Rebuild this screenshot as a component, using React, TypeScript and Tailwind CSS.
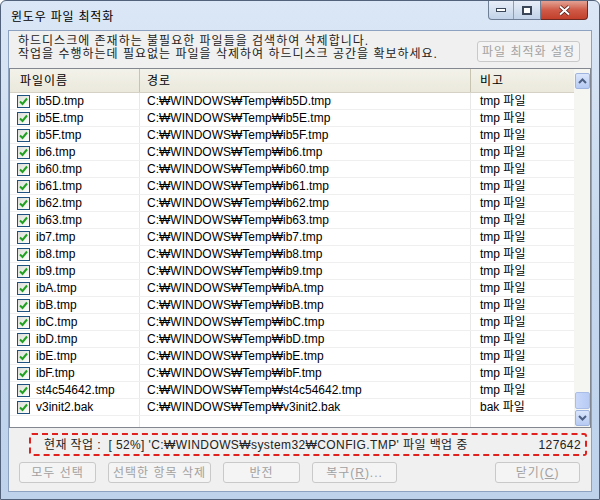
import React from 'react'

const files = [
  'ib5D.tmp', 'ib5E.tmp', 'ib5F.tmp', 'ib6.tmp', 'ib60.tmp', 'ib61.tmp', 'ib62.tmp', 'ib63.tmp',
  'ib7.tmp', 'ib8.tmp', 'ib9.tmp', 'ibA.tmp', 'ibB.tmp', 'ibC.tmp', 'ibD.tmp', 'ibE.tmp', 'ibF.tmp',
  'st4c54642.tmp', 'v3init2.bak',
]

const font = { fontFamily: '"Liberation Sans", "Noto Sans CJK KR", sans-serif' }

function Check() {
  return (
    <span className="flex h-[13px] w-[13px] items-center justify-center border border-[#1c5180] bg-gradient-to-br from-[#dcdcd7] to-white">
      <svg width="9" height="9" viewBox="0 0 9 9">
        <path d="M1 4.5 L3.5 7 L8 1.5" fill="none" stroke="#21a121" strokeWidth="2" />
      </svg>
    </span>
  )
}

function Btn({ label, w }: { label: React.ReactNode; w: string }) {
  return (
    <div className={`${w} flex h-[21px] items-center justify-center rounded-[3px] border border-[#c9c9c9] bg-[#f4f4f4] text-[12px] tracking-[1px] text-[#a2a2a2]`}>
      {label}
    </div>
  )
}

function ScrollBtn({ up }: { up?: boolean }) {
  return (
    <div className="flex h-[16px] w-[15px] items-center justify-center rounded-[2px] border border-[#9fb5e0] bg-gradient-to-b from-[#dbe6fb] to-[#b6caf3]">
      <svg width="9" height="6" viewBox="0 0 9 6">
        <path d={up ? 'M1 5 L4.5 1.5 L8 5' : 'M1 1 L4.5 4.5 L8 1'} fill="none" stroke="#4d6185" strokeWidth="2" />
      </svg>
    </div>
  )
}

export default function App() {
  return (
    <div style={font} className="flex h-[500px] w-[600px] flex-col overflow-hidden rounded-t-[6px] border border-[#51627a] bg-gradient-to-b from-[#dbe7f6] via-[#c6d8ee] to-[#bed2ec] text-black">
      {/* title bar */}
      <div className="flex h-[29px] items-start justify-between">
        <div className="pl-[10px] pt-[8px] text-[12px] leading-[16px] tracking-[0.8px]">윈도우 파일 최적화</div>
        <div className="mr-[11px] flex">
          <div className="flex h-[19px] rounded-bl-[4px] border border-t-0 border-[#6f7f96] bg-gradient-to-b from-[#e8eef8] to-[#c2d2e8]">
            <div className="flex w-[25px] items-center justify-center border-r border-[#8d9db4]">
              <div className="h-[4px] w-[10px] border border-[#3b4658] bg-white" />
            </div>
            <div className="flex w-[26px] items-center justify-center">
              <div className="h-[9px] w-[10px] border-2 border-[#3b4658] bg-white" />
            </div>
          </div>
          <div className="flex h-[19px] w-[47px] items-center justify-center rounded-br-[4px] border border-l-0 border-t-0 border-[#6e2a22] bg-gradient-to-b from-[#e2a294] via-[#cf5a47] to-[#c23f2b]">
            <svg width="13" height="11" viewBox="0 0 13 11">
              <path d="M2 1.5 L11 9.5 M11 1.5 L2 9.5" stroke="#4b1a14" strokeWidth="3.5" />
              <path d="M2 1.5 L11 9.5 M11 1.5 L2 9.5" stroke="white" strokeWidth="2" />
            </svg>
          </div>
        </div>
      </div>

      {/* client */}
      <div className="mx-[7px] flex h-[462px] flex-col border border-[#8ca2c0] bg-[#f0f0f0]">
        <div className="flex h-[37px] items-start justify-between">
          <div className="pl-[9px] pt-[4px] text-[12px] leading-[13px] tracking-[1px] text-[#222]">
            <div>하드디스크에 존재하는 불필요한 파일들을 검색하여 삭제합니다.</div>
            <div>작업을 수행하는데 필요없는 파일을 삭제하여 하드디스크 공간을 확보하세요.</div>
          </div>
          <div className="mr-[11px] mt-[10px]">
            <Btn label="파일 최적화 설정" w="w-[103px]" />
          </div>
        </div>

        {/* list */}
        <div className="flex h-[360px] border border-[#828790] bg-white">
          <div className="flex flex-1 flex-col">
            <div className="flex h-[24px] items-center border-b border-[#d5d2c5] bg-gradient-to-b from-[#f3f2ea] to-[#ebe9dc] text-[12px] tracking-[1px]">
              <div className="flex h-full w-[130px] items-center border-r border-[#c7c5b2] pl-[10px]">파일이름</div>
              <div className="flex h-full w-[331px] items-center border-r border-[#c7c5b2] pl-[7px]">경로</div>
              <div className="flex h-full flex-1 items-center pl-[9px]">비고</div>
            </div>
            {files.map((f) => (
              <div key={f} className="flex h-[17px] items-center border-b border-[#efefef] text-[12px] leading-[16px]">
                <div className="flex h-full w-[130px] items-center gap-[6px] border-r border-[#e8e8e8] pl-[7px]">
                  <Check />
                  <span>{f}</span>
                </div>
                <div className="flex h-full w-[331px] items-center border-r border-[#e8e8e8] pl-[7px]">
                  C:₩WINDOWS₩Temp₩{f}
                </div>
                <div className="flex h-full flex-1 items-center pl-[9px]">
                  {f.endsWith('.bak') ? 'bak' : 'tmp'} 파일
                </div>
              </div>
            ))}
            <div className="flex flex-1">
              <div className="w-[130px] border-r border-[#e8e8e8]" />
              <div className="w-[331px] border-r border-[#e8e8e8]" />
            </div>
          </div>
          <div className="flex w-[16px] flex-col items-center bg-[#f5f5f1] pb-[1px] pt-[4px]">
            <ScrollBtn up />
            <div className="flex-1" />
            <div className="mb-[1px] h-[17px] w-[15px] rounded-[2px] border border-[#a9bde6] bg-gradient-to-r from-[#c9d8fb] to-[#b8cbf4]" />
            <ScrollBtn />
          </div>
        </div>

        {/* status */}
        <div className="ml-[20px] mr-[4px] mt-[5px] flex h-[23px] items-center justify-between rounded-[3px] border-2 border-dashed border-[#e0211d] pl-[13px] pr-[4px] text-[12px] tracking-[0.4px] text-[#222]">
          <span>현재 작업 :&nbsp; [ 52%] 'C:₩WINDOWS₩system32₩CONFIG.TMP' 파일 백업 중</span>
          <span>127642</span>
        </div>

        {/* buttons */}
        <div className="mt-[6px] flex items-center pl-[10px] pr-[11px]">
          <Btn label="모두 선택" w="w-[77px]" />
          <div className="w-[12px]" />
          <Btn label="선택한 항목 삭제" w="w-[103px]" />
          <div className="w-[12px]" />
          <Btn label="반전" w="w-[77px]" />
          <div className="w-[12px]" />
          <Btn label={<span>복구(<u>R</u>)...</span>} w="w-[85px]" />
          <div className="flex-1" />
          <Btn label={<span>닫기(<u>C</u>)</span>} w="w-[85px]" />
        </div>
      </div>
    </div>
  )
}
